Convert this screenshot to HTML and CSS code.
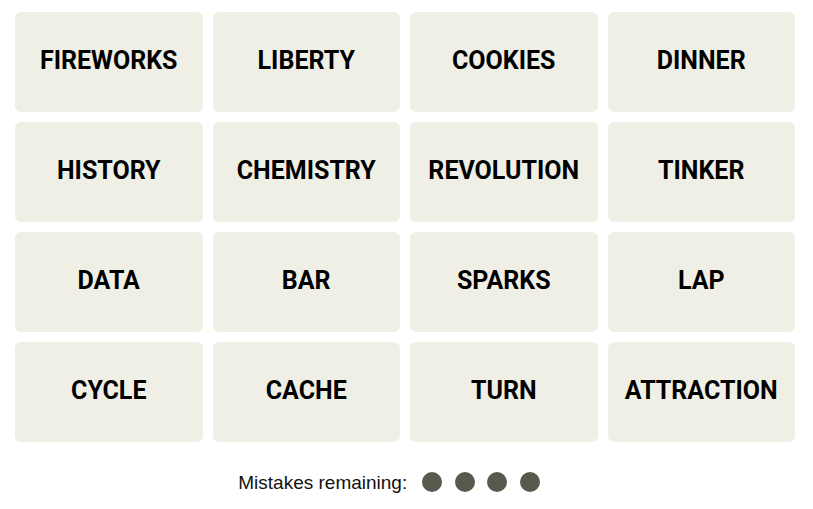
FILE: index.html
```html
<!DOCTYPE html>
<html lang="en">
<head>
    <meta charset="UTF-8">
    <meta name="viewport" content="width=device-width, initial-scale=1.0">
    <title>Connections</title>
    <link rel="stylesheet" href="styles.css">
</head>
<body>
    <div class="board">
        <div class="grid">
            <button class="card">FIREWORKS</button>
            <button class="card">LIBERTY</button>
            <button class="card">COOKIES</button>
            <button class="card">DINNER</button>
            <button class="card">HISTORY</button>
            <button class="card">CHEMISTRY</button>
            <button class="card">REVOLUTION</button>
            <button class="card">TINKER</button>
            <button class="card">DATA</button>
            <button class="card">BAR</button>
            <button class="card">SPARKS</button>
            <button class="card">LAP</button>
            <button class="card">CYCLE</button>
            <button class="card">CACHE</button>
            <button class="card">TURN</button>
            <button class="card">ATTRACTION</button>
        </div>
        <div class="mistakes">
            <span class="label">Mistakes remaining:</span>
            <span class="dots">
                <span class="dot"></span>
                <span class="dot"></span>
                <span class="dot"></span>
                <span class="dot"></span>
            </span>
        </div>
    </div>
</body>
</html>
```

FILE: styles.css
```css
body{
    margin: 0;
    background: #fff;
    font-family: 'Liberation Sans', Arial, sans-serif;
}
.board{
    width: 780px;
    padding: 12px 15px 0 15px;
}
.grid{
    display: grid;
    grid-template-columns: repeat(4, 1fr);
    grid-auto-rows: 100px;
    gap: 10px;
}
.card{
    border: 0;
    border-radius: 6px;
    background-color: #efefe6;
    color: #000;
    font-family: Roboto, 'Liberation Sans', sans-serif;
    font-weight: 700;
    font-size: 25px;
    padding: 0 0 3px 0;
    cursor: pointer;
}
.mistakes{
    display: flex;
    align-items: center;
    justify-content: center;
    height: 80px;
    padding-right: 32px;
    font-size: 19px;
    color: #121212;
}
.label{
    padding-top: 1px;
}
.dots{
    display: flex;
    gap: 12.5px;
    margin-left: 15px;
}
.dot{
    width: 20px;
    height: 20px;
    border-radius: 50%;
    background-color: #5a594e;
}
```
